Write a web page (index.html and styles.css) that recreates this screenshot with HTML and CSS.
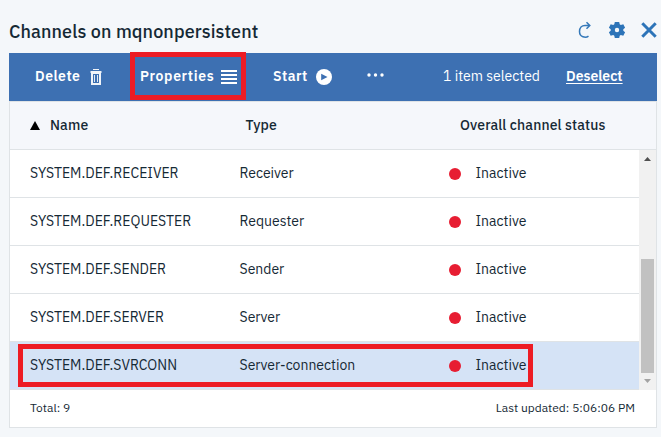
FILE: index.html
```html
<!DOCTYPE html>
<html lang="en">
<head>
<meta charset="utf-8">
<title>Channels on mqnonpersistent</title>
<link rel="stylesheet" href="styles.css">
</head>
<body>
<section class="widget">
  <header class="titlebar">
    <h1 class="title">Channels on mqnonpersistent</h1>
    <div class="controls">
      <svg class="refresh" width="14" height="18" viewBox="0 0 14 18" fill="none" stroke="#3478b9" stroke-width="1.5"><path d="M11.500 15.200C8.800 17.200 2.500 16.400 2.500 10.500C2.500 6.800 4.800 4.500 8 4.500H12.800M9.500 1.200L12.800 4.500 9.500 7.800"/></svg>
      <svg class="gear" width="18" height="18" viewBox="0 0 18 18" fill="#2d74b8"><path fill-rule="evenodd" d="M6.800 1h4.400l.5 2.300 1.100.7 2.500-.7 1.800 3.400L15.300 8.300v1.400l1.800 1.600-1.800 3.400-2.500-.7-1.100.7-.5 2.300H6.800l-.5-2.300-1.100-.7-2.500.7L.9 11.300l1.800-1.600V8.300L.9 6.700l1.800-3.400 2.500.7 1.100-.7zM9 6.800a2.200 2.200 0 1 0 0 4.400 2.200 2.200 0 0 0 0-4.400z"/></svg>
      <svg class="close" width="16" height="18" viewBox="0 0 16 18" fill="none" stroke="#2d74b8" stroke-width="3"><path d="M1.300 2.300l13.400 13.400M14.700 2.300L1.300 15.700"/></svg>
    </div>
  </header>

  <div class="toolbar">
    <div class="action delete"><span class="label">Delete</span>
      <svg width="12" height="16" viewBox="0 0 12 16"><path fill="#fff" fill-opacity=".92" fill-rule="evenodd" d="M3 0h6v1H3zM.5 2h11v2h-.5v12H1V4H.5zM3 5v9h6V5z"/><path fill="#fff" fill-opacity=".85" d="M4 6h1v7H4zM7 6h1v7H7z"/></svg>
    </div>
    <div class="action properties"><span class="label">Properties</span>
      <svg width="16" height="14" viewBox="0 0 16 14" fill="#fff"><path d="M0 0h16v2H0zM0 4h16v2H0zM0 8h16v2H0zM0 12h16v2H0z"/></svg>
      <i class="mark mark-properties"></i>
    </div>
    <div class="action start"><span class="label">Start</span>
      <svg width="16" height="16" viewBox="0 0 16 16"><circle cx="8" cy="8" r="8" fill="#fff"/><path d="M5.200 4.700L11.500 8l-6.300 3.300z" fill="#3d70b2"/></svg>
    </div>
    <svg class="more" width="17" height="4" viewBox="0 0 17 4" fill="#fff"><circle cx="2" cy="2" r="1.700"/><circle cx="8.500" cy="2" r="1.700"/><circle cx="15" cy="2" r="1.700"/></svg>
    <span class="selected-count">1 item selected</span>
    <span class="deselect">Deselect</span>
  </div>

  <div class="panel">
    <div class="columns">
      <svg class="sort" width="10" height="9" viewBox="0 0 10 9"><path d="M5 0l5 9H0z"/></svg>
      <span class="head-name">Name</span>
      <span class="head-type">Type</span>
      <span class="head-status">Overall channel status</span>
    </div>
    <div class="body">
      <div class="rows">
        <div class="row"><span class="name">SYSTEM.DEF.RECEIVER</span><span class="type">Receiver</span><i class="dot"></i><span class="status">Inactive</span></div>
        <div class="row"><span class="name">SYSTEM.DEF.REQUESTER</span><span class="type">Requester</span><i class="dot"></i><span class="status">Inactive</span></div>
        <div class="row"><span class="name">SYSTEM.DEF.SENDER</span><span class="type">Sender</span><i class="dot"></i><span class="status">Inactive</span></div>
        <div class="row"><span class="name">SYSTEM.DEF.SERVER</span><span class="type">Server</span><i class="dot"></i><span class="status">Inactive</span></div>
        <div class="row chosen"><span class="name">SYSTEM.DEF.SVRCONN</span><span class="type">Server-connection</span><i class="dot"></i><span class="status">Inactive</span><i class="mark mark-row"></i></div>
      </div>
      <div class="scrollbar">
        <svg width="7" height="4" viewBox="0 0 7 4" fill="#505050"><path d="M3.500 0L7 4H0z"/></svg>
        <div class="thumb"></div>
        <svg width="7" height="4" viewBox="0 0 7 4" fill="#a3a3a3"><path d="M3.500 4L7 0H0z"/></svg>
      </div>
    </div>
    <footer class="footer"><span class="total">Total: 9</span><span class="updated">Last updated: 5:06:06 PM</span></footer>
  </div>
</section>
</body>
</html>
```

FILE: styles.css
```css
* { box-sizing: border-box; }
body {
  margin: 0;
  background: #f4f7fa;
  color: #152935;
  font: 14px/20px "IBM Plex Sans", Roboto, "Liberation Sans", sans-serif;
  white-space: nowrap;
  overflow: hidden;
}
svg { display: block; flex: none; }
.widget { width: 661px; height: 437px; padding: 0 4px 0 9px; }
.titlebar { height: 53px; display: flex; justify-content: space-between; padding-top: 21px; }
.title { margin: 0; font-size: 18px; line-height: 22px; font-weight: 500; letter-spacing: .1px; }
.controls { display: flex; }
.refresh { margin-right: 17px; }
.gear { margin-right: 15px; }
.toolbar {
  width: 648px; height: 48px; padding-left: 26px;
  display: flex; align-items: center;
  background: #3d70b2; color: #fff;
}
.toolbar span, .columns span, .row span { padding-bottom: 2px; }
.action { position: relative; display: flex; align-items: center; font-weight: 600; }
.delete { width: 105px; }
.delete .label { width: 55px; letter-spacing: .5px; }
.properties { width: 133px; }
.properties .label { width: 81px; letter-spacing: .65px; }
.start { width: 94px; }
.start .label { width: 43px; letter-spacing: .5px; }
.more { margin-bottom: 4px; }
.selected-count { width: 123px; margin-left: 59px; }
.deselect { font-weight: 600; text-decoration: underline; text-underline-offset: 2px; }
.mark { position: absolute; border: 5px solid #ed1c24; }
.mark-properties { left: -10px; top: -14px; width: 116px; height: 48px; }
.panel { width: 648px; height: 327px; border: 1px solid #dfe3e6; background: #fff; }
.columns {
  height: 48px; padding-left: 20px;
  display: flex; align-items: center;
  background: #f5f7fb; border-bottom: 1px solid #dfe3e6;
  font-weight: 500; letter-spacing: .12px;
}
.sort { margin-right: 10px; }
.head-name { width: 195.5px; }
.head-type { width: 214.5px; }
.body { display: flex; height: 240px; }
.rows { width: 629px; }
.row {
  position: relative; height: 48px; padding-left: 20px;
  display: flex; align-items: center;
  border-bottom: 1px solid #dfe3e6;
}
.chosen { background: #d5e3f6; }
.name { width: 209.5px; }
.type { width: 209.5px; }
.dot { width: 12px; height: 12px; margin-right: 14.5px; border-radius: 50%; background: #e71d32; }
.mark-row { left: 8px; top: 2px; width: 515px; height: 43px; }
.scrollbar {
  width: 17px; padding: 7px 0 6px;
  display: flex; flex-direction: column; align-items: center;
  background: #f1f1f1;
}
.thumb { width: 13px; height: 114px; margin: 98px 0 6px; background: #c1c1c1; }
.footer {
  height: 37px; padding: 0 21px 2px 20px;
  display: flex; align-items: center; justify-content: space-between;
  font-size: 12px;
}
```
